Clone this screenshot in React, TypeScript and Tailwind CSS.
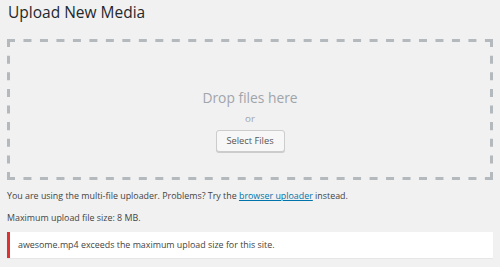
import React from "react";

export default function App() {
  return (
    <div
      className="w-[500px] h-[267px] bg-[#f1f1f1] px-[7px] overflow-hidden"
      style={{ fontFamily: '"Open Sans", "Liberation Sans", sans-serif' }}
    >
      <h1 className="pt-[1px] text-[15.5px] leading-[22px] text-[#23282d] font-normal pl-px">
        Upload New Media
      </h1>
      <div className="relative mt-[16px] h-[141px] flex flex-col items-center">
        <svg
          className="absolute inset-0 pointer-events-none"
          width="486"
          height="141"
          viewBox="0 0 486 141"
        >
          <g stroke="#b4b9be" strokeWidth="3" fill="none">
            <line x1="0" y1="1.5" x2="486" y2="1.5" strokeDasharray="8 8.48" />
            <line x1="0" y1="139.5" x2="486" y2="139.5" strokeDasharray="8 8.48" />
            <line x1="1.5" y1="0" x2="1.5" y2="141" strokeDasharray="8 8.625" />
            <line x1="484.5" y1="0" x2="484.5" y2="141" strokeDasharray="8 8.625" />
          </g>
        </svg>
        <div className="mt-[49px] text-[13.8px] leading-[20px] text-[#a0a5aa]">Drop files here</div>
        <div className="mt-[4px] text-[9.8px] leading-[14px] text-[#a0a5aa]">or</div>
        <button className="mt-[4px] h-[22px] w-[69px] rounded-[3px] border border-[#cccccc] bg-[#f7f7f7] text-[9.3px] text-[#555555] shadow-[0_1px_0_#cccccc]">
          Select Files
        </button>
      </div>
      <p className="mt-[9px] text-[8.9px] leading-[14px] text-[#444444]">
        You are using the multi-file uploader. Problems? Try the{" "}
        <a className="text-[#0073aa] underline">browser uploader</a> instead.
      </p>
      <p className="mt-[8px] text-[8.9px] leading-[14px] text-[#444444]">
        Maximum upload file size: 8 MB.
      </p>
      <div className="mt-[7px] h-[26px] bg-white border-l-[3px] border-[#dc3232] shadow-[0_1px_1px_rgba(0,0,0,0.04)] flex items-center pl-[8px] text-[8.9px] text-[#444444]">
        awesome.mp4 exceeds the maximum upload size for this site.
      </div>
    </div>
  );
}
